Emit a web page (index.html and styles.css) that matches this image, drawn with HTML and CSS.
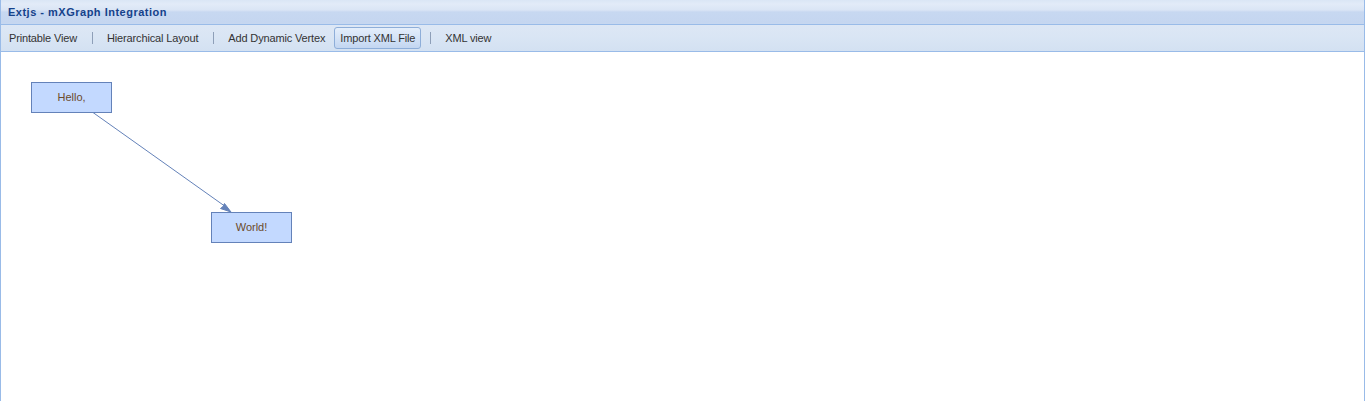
FILE: index.html
```html
<!DOCTYPE html>
<html>
<head>
<meta charset="utf-8">
<title>Extjs - mXGraph Integration</title>
<link rel="stylesheet" href="styles.css">
</head>
<body>
<div class="panel">
  <div class="header"><span class="title">Extjs - mXGraph Integration</span></div>
  <div class="toolbar">
    <span class="btn">Printable View</span>
    <span class="sep"></span>
    <span class="btn">Hierarchical Layout</span>
    <span class="sep"></span>
    <span class="btn">Add Dynamic Vertex</span>
    <span class="btn active">Import XML File</span>
    <span class="sep"></span>
    <span class="btn">XML view</span>
  </div>
  <div class="body">
    <svg class="graph" width="1363" height="349" viewBox="0 52 1363 349" xmlns="http://www.w3.org/2000/svg">
      <g transform="translate(-1 0)">
        <rect x="31.5" y="82.5" width="80" height="30" fill="#c3d9ff" stroke="#6482b9"/>
        <text x="71.5" y="101" text-anchor="middle" class="vtx">Hello,</text>
        <rect x="211.5" y="212.5" width="80" height="30" fill="#c3d9ff" stroke="#6482b9"/>
        <text x="251.5" y="231" text-anchor="middle" class="vtx">World!</text>
        <line x1="93" y1="112.5" x2="226" y2="207" stroke="#6482b9" stroke-width="1"/>
        <path d="M231 212 L220.5 208.5 L223 206.5 L224.5 203.5 Z" fill="#6482b9" stroke="#6482b9" stroke-width="1" stroke-linejoin="round"/>
      </g>
    </svg>
  </div>
</div>
</body>
</html>
```
FILE: styles.css
```css
html, body {
  margin: 0;
  padding: 0;
  background: #ffffff;
}
body {
  font-family: "Liberation Sans", Arial, sans-serif;
  font-size: 11px;
}
.panel {
  width: 1363px;
  height: 401px;
  border-left: 1px solid #99bbe8;
  border-right: 1px solid #99bbe8;
  display: flex;
  flex-direction: column;
  overflow: hidden;
}
.header {
  height: 24px;
  border-bottom: 1px solid #99bbe8;
  background: linear-gradient(to bottom, #dae6f5 0px, #e2ebf8 4px, #dae5f5 10px, #c7d8f1 12px, #c5d6f0 23px, #c8d8f0 24px);
  display: flex;
  align-items: center;
  padding-left: 7px;
}
.title {
  font-family: "Liberation Sans", Arial, sans-serif;
  font-weight: bold;
  font-size: 11px;
  color: #15428b;
  letter-spacing: 0.5px;
}
.toolbar {
  height: 26px;
  border-bottom: 1px solid #99bbe8;
  background: linear-gradient(to bottom, #dde7f5 0px, #d9e5f4 13px, #d3e1f2 26px);
  display: flex;
  align-items: center;
  padding-left: 2px;
}
.btn {
  font-family: "Liberation Sans", Arial, sans-serif;
  font-size: 11px;
  color: #333333;
  height: 22px;
  line-height: 20px;
  padding: 0 5px;
  box-sizing: border-box;
  border: 1px solid transparent;
  border-radius: 3px;
  white-space: nowrap;
  letter-spacing: -0.15px;
}
.btn.active {
  background: linear-gradient(to bottom, #e4eefb 0px, #d4e3f7 10px, #c3d6f1 20px);
  border-color: #8eaed9;
  margin-left: 3px;
}
.sep {
  width: 1px;
  height: 12px;
  background: #8e9fb8;
  margin: 0 8px 0 9px;
}
.body {
  flex: 1;
  background: #ffffff;
  position: relative;
}
.graph {
  display: block;
}
.vtx {
  font-family: "Liberation Sans", Arial, sans-serif;
  font-size: 11px;
  fill: #6b4a2a;
}
```
